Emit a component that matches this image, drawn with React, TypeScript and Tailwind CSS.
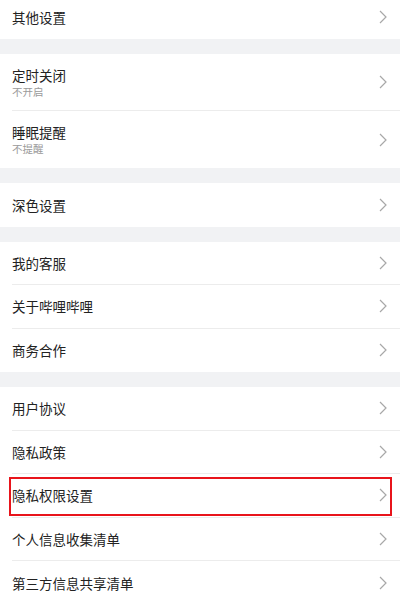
import React from "react";

const font = { fontFamily: '"Noto Sans CJK SC", "Noto Sans", sans-serif' };

function Chevron() {
  return (
    <svg width="8" height="14" viewBox="0 0 8 14" fill="none" className="shrink-0">
      <polyline points="1,1 7,7 1,13" stroke="#a8a8a8" strokeWidth="1.2" strokeLinejoin="miter" />
    </svg>
  );
}

type Item = { title: string; sub?: string; marked?: boolean };

function Row({ item, last }: { item: Item; last: boolean }) {
  return (
    <div className="relative bg-white pl-3">
      <div
        className={
          "flex items-center justify-between pr-[13px] " +
          (item.sub ? "h-[57px] " : "h-[43.5px] ") +
          (last ? "" : "border-b border-[#ececec]")
        }
      >
        <div className="flex flex-col">
          <span className="text-[13.5px] leading-[18px] text-[#222]">{item.title}</span>
          {item.sub && <span className="mt-[1px] text-[10.5px] leading-[14px] text-[#9a9a9a]">{item.sub}</span>}
        </div>
        <Chevron />
      </div>
      {item.marked && (
        <div className="absolute left-[9px] right-[8px] top-[2.5px] bottom-[2px] border-2 border-[#e8141b]" />
      )}
    </div>
  );
}

function Group({ items }: { items: Item[] }) {
  return (
    <div className="bg-white">
      {items.map((item, i) => (
        <Row key={item.title} item={item} last={i === items.length - 1} />
      ))}
    </div>
  );
}

function Gap() {
  return <div className="h-[15px] bg-[#f1f2f4]" />;
}

export default function App() {
  return (
    <div className="w-[400px] h-[595px] overflow-hidden bg-white" style={font}>
      <div className="flex h-[39px] items-center justify-between pb-[6px] pl-3 pr-[13px]">
        <span className="text-[13.5px] leading-[18px] text-[#222]">其他设置</span>
        <Chevron />
      </div>
      <Gap />
      <Group
        items={[
          { title: "定时关闭", sub: "不开启" },
          { title: "睡眠提醒", sub: "不提醒" },
        ]}
      />
      <Gap />
      <Group items={[{ title: "深色设置" }]} />
      <Gap />
      <Group items={[{ title: "我的客服" }, { title: "关于哔哩哔哩" }, { title: "商务合作" }]} />
      <Gap />
      <Group
        items={[
          { title: "用户协议" },
          { title: "隐私政策" },
          { title: "隐私权限设置", marked: true },
          { title: "个人信息收集清单" },
          { title: "第三方信息共享清单" },
        ]}
      />
    </div>
  );
}
